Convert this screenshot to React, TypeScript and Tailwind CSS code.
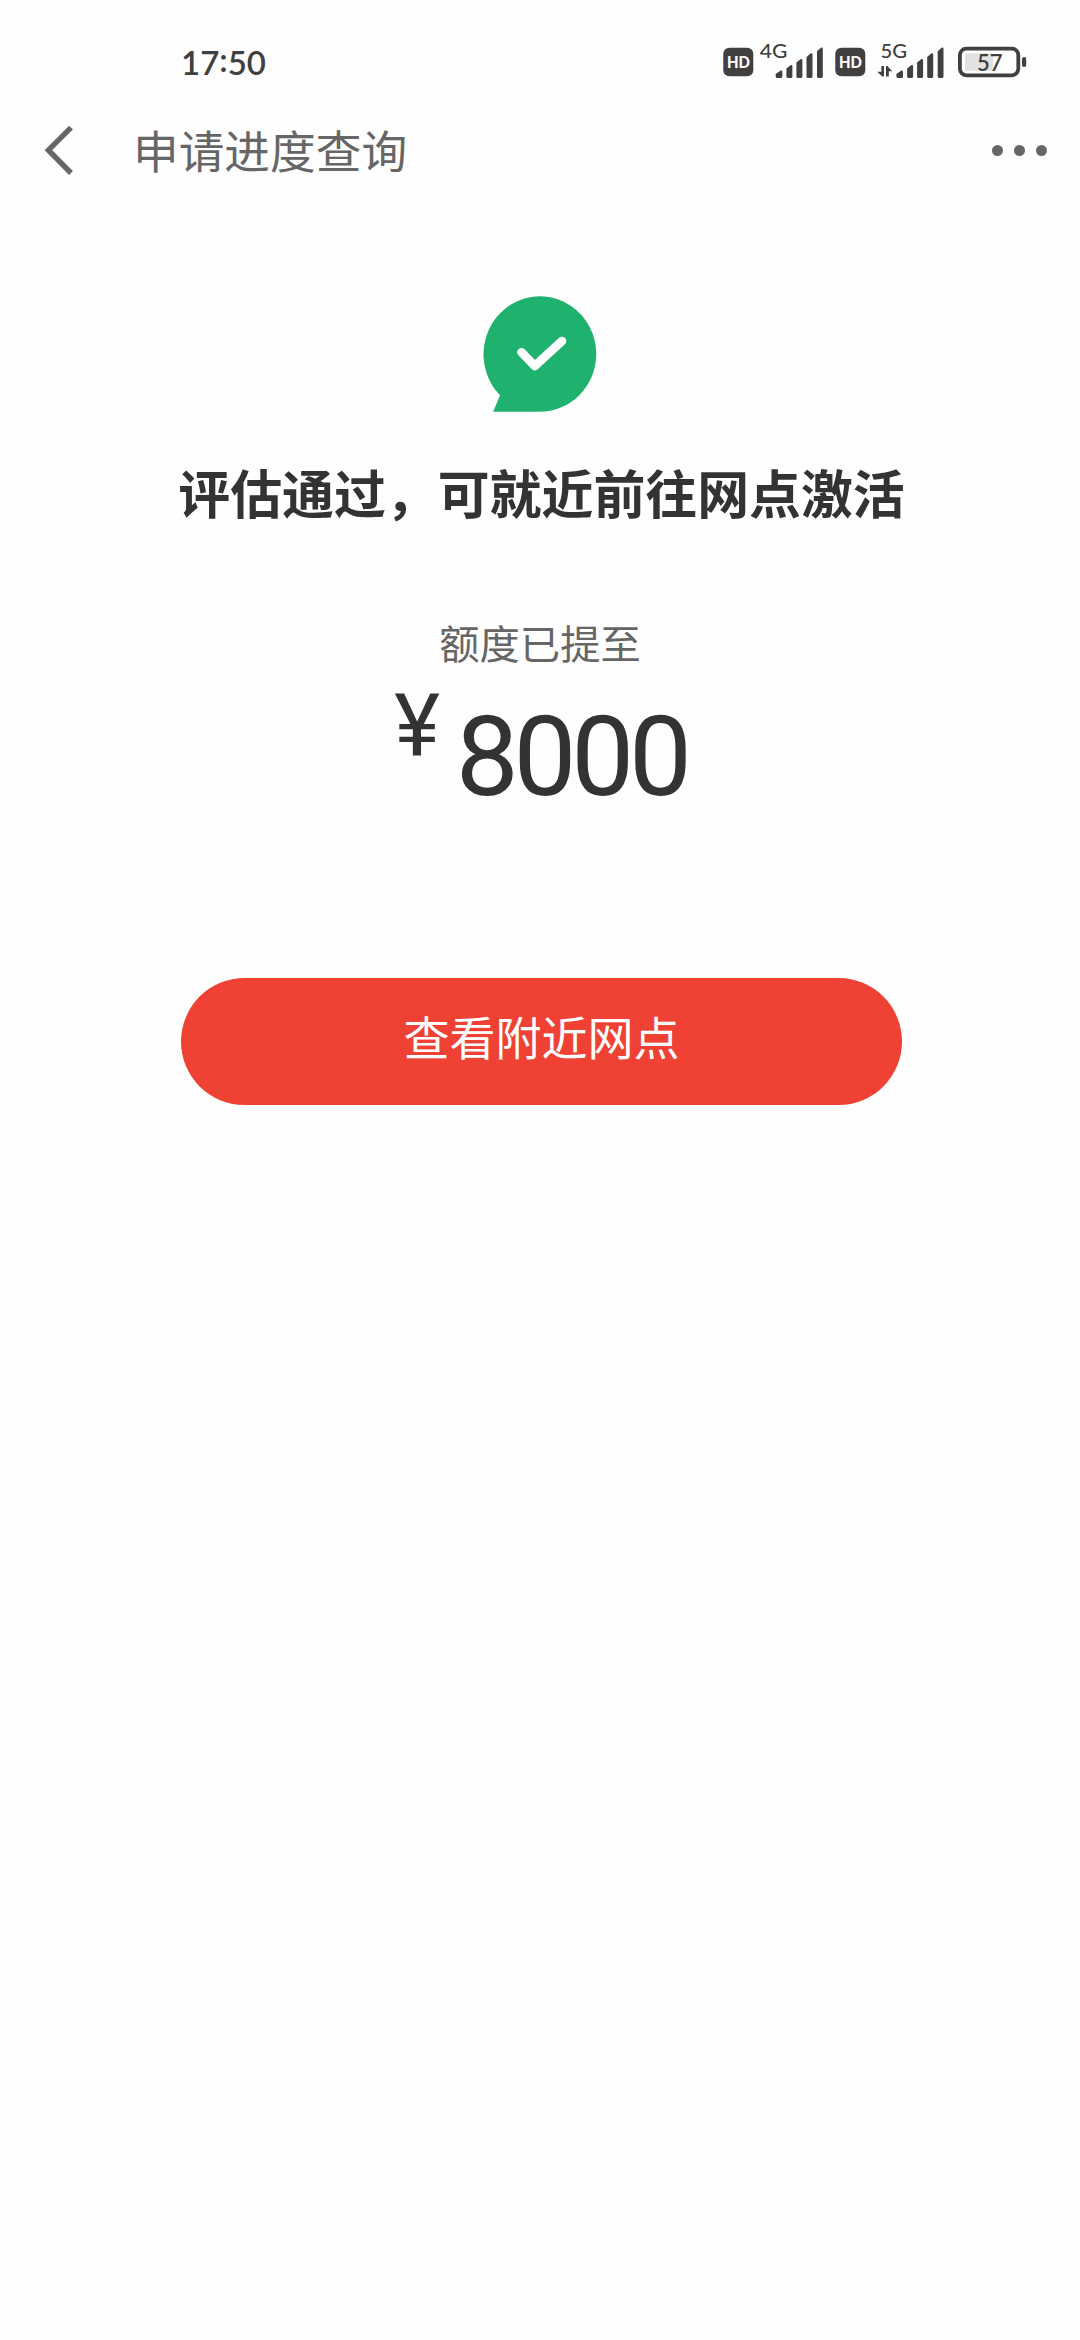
import React from "react";

function HdBadge() {
  return (
    <svg width="31" height="30" viewBox="0 0 31 30" className="block">
      <rect x="0.3" y="0.7" width="30" height="28.6" rx="6" fill="#404040" />
      <text x="15.4" y="20.6" textAnchor="middle" textLength="23" lengthAdjust="spacingAndGlyphs" fontSize="16" fontWeight="900" fontFamily="Lato, sans-serif" fill="#fff">
        HD
      </text>
    </svg>
  );
}

function SignalBars({ x }: { x: number }) {
  const bars = [
    { left: 0, top: 30.5, width: 6.6 },
    { left: 10.7, top: 25, width: 6 },
    { left: 20.7, top: 19, width: 6 },
    { left: 30.8, top: 13.3, width: 6 },
    { left: 41.3, top: 7.6, width: 5.8 },
  ];
  return (
    <g fill="#404040">
      {bars.map((b) => (
        <path
          key={b.left}
          d={`M${x + b.left} ${b.top + 3.6} L${x + b.left + b.width - 1.6} ${b.top} Q${x + b.left + b.width} ${b.top - 0.3} ${x + b.left + b.width} ${b.top + 1.4} V36.6 Q${x + b.left + b.width} 38 ${x + b.left + b.width - 1.3} 38 H${x + b.left + 1.3} Q${x + b.left} 38 ${x + b.left} 36.6 Z`}
        />
      ))}
    </g>
  );
}

function Signal4G() {
  return (
    <svg width="64" height="40" viewBox="0 0 64 40" className="block">
      <text x="-0.2" y="17.8" textLength="27.6" lengthAdjust="spacingAndGlyphs" fontSize="18.6" fontWeight="500" fontFamily="Lato, sans-serif" fill="#404040">
        4G
      </text>
      <SignalBars x={15.7} />
    </svg>
  );
}

function Signal5G() {
  return (
    <svg width="68" height="40" viewBox="0 0 68 40" className="block">
      <text x="3.6" y="17.8" textLength="26.6" lengthAdjust="spacingAndGlyphs" fontSize="18.6" fontWeight="500" fontFamily="Lato, sans-serif" fill="#404040">
        5G
      </text>
      <path d="M4.4 26H7V36.6H5.4L0.2 31.8H4.4Z" fill="#404040" />
      <path d="M9 26H10.4L15.2 31.2H11.8V36.6H9Z" fill="#404040" />
      <SignalBars x={19.4} />
    </svg>
  );
}

function Battery() {
  return (
    <svg width="69" height="32" viewBox="0 0 69 32" className="block">
      <rect x="7" y="7.3" width="28" height="17.4" rx="2" fill="#e2e2e2" />
      <rect x="1.9" y="2.6" width="58.4" height="26.7" rx="6.5" fill="none" stroke="#404040" strokeWidth="3.8" />
      <rect x="64" y="11" width="4.2" height="10" rx="2" fill="#404040" />
      <text x="31.8" y="25" textAnchor="middle" textLength="25.6" lengthAdjust="spacingAndGlyphs" fontSize="22.5" fontWeight="600" fontFamily="Lato, sans-serif" fill="#404040">
        57
      </text>
    </svg>
  );
}

function StatusBar() {
  return (
    <div className="flex h-[124px] items-center justify-between pl-[181px] pr-[53px]">
      <span className="font-[Lato] text-[33px] font-semibold leading-none text-[#404040]">
        17<span className="inline-block -translate-y-[3px]">:</span>50
      </span>
      <div className="flex items-center">
        <HdBadge />
        <div className="-mt-1 ml-[6px]">
          <Signal4G />
        </div>
        <div className="ml-[11px]">
          <HdBadge />
        </div>
        <div className="-mt-1 ml-[11px]">
          <Signal5G />
        </div>
        <div className="ml-[13px]">
          <Battery />
        </div>
      </div>
    </div>
  );
}

function NavBar() {
  return (
    <header className="flex h-[52px] items-center pl-[44px] pr-[33px] text-[#666]">
      <button aria-label="返回">
        <svg width="30" height="52" viewBox="0 0 30 52" fill="none" stroke="#666" strokeWidth="5.4" className="block">
          <path d="M27 3.6 L4.4 26.2 L27 49" />
        </svg>
      </button>
      <h1 className="ml-[59px] text-[45.7px] leading-none">申请进度查询</h1>
      <button aria-label="更多" className="ml-auto flex gap-[11px]">
        <span className="size-[11px] rounded-full bg-[#666]" />
        <span className="size-[11px] rounded-full bg-[#666]" />
        <span className="size-[11px] rounded-full bg-[#666]" />
      </button>
    </header>
  );
}

function SuccessBubble() {
  return (
    <svg width="114" height="118" viewBox="0 0 114 118" className="block">
      <path d="M17 100.3 A56.4 58 0 1 1 113.3 58.4 C113.3 91 88 116.8 56 116.8 H10.2 Z" fill="#1fb26f" />
      <path d="M38.5 57.3 L51.8 71 L79 46" fill="none" stroke="#fff" strokeWidth="8.6" strokeLinecap="round" strokeLinejoin="round" />
    </svg>
  );
}

export default function App() {
  return (
    <div className="flex h-[2340px] w-[1080px] flex-col bg-[#fefefe] font-['Noto_Sans_CJK_SC',sans-serif]">
      <StatusBar />
      <NavBar />
      <main className="flex flex-col items-center">
        <div className="mt-[119px]">
          <SuccessBubble />
        </div>
        <h2 className="mt-[49px] ml-[3px] whitespace-nowrap text-[51.9px] font-bold leading-[60px] text-[#333]">评估通过，可就近前往网点激活</h2>
        <p className="mt-[96px] text-[40.3px] leading-[48px] text-[#666]">额度已提至</p>
        <div className="ml-[1px] mt-[19px] flex h-[130px] items-start text-[#333]">
          <span className="-mt-[2px] font-[Roboto] text-[87px] leading-[87px]">¥</span>
          <span className="ml-[16px] mt-[16px] font-[Roboto] text-[112px] leading-[112px] tracking-[-5.2px]">8000</span>
        </div>
        <button className="mt-[163px] ml-[3px] h-[127px] w-[721px] rounded-full bg-[#ef4134] pb-[13px] text-[46px] leading-none text-white">查看附近网点</button>
      </main>
    </div>
  );
}
